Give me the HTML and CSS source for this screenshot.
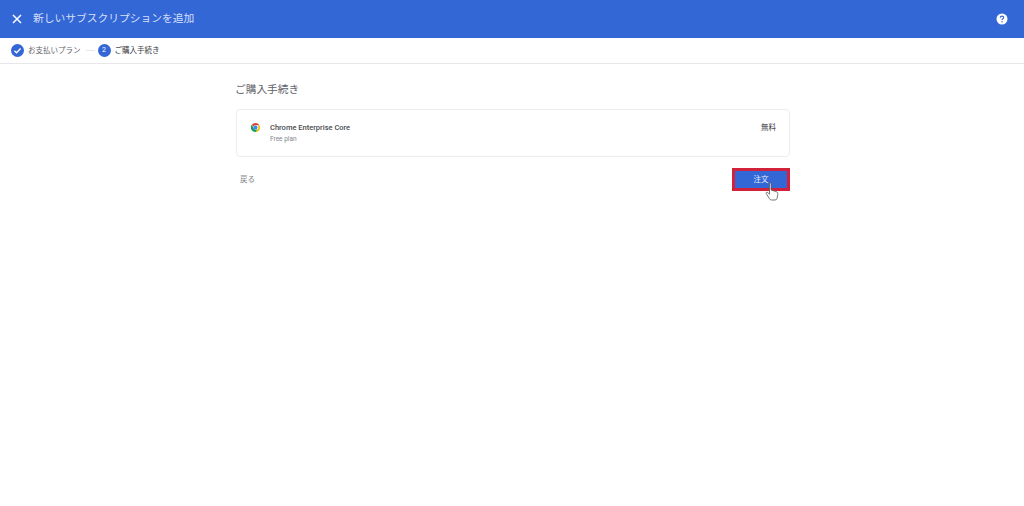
FILE: index.html
```html
<!DOCTYPE html>
<html lang="ja">
<head>
<meta charset="utf-8">
<title>新しいサブスクリプションを追加</title>
<link rel="stylesheet" href="styles.css">
</head>
<body>
<header class="appbar">
  <svg class="close" viewBox="0 0 10 10" width="10" height="10"><path d="M1 1L9 9M9 1L1 9" stroke="#fff" stroke-width="1.5" fill="none"/></svg>
  <h1 class="appbar-title">新しいサブスクリプションを追加</h1>
  <svg class="help" viewBox="0 0 12 12" width="12" height="12"><circle cx="6" cy="6" r="5.5" fill="#fff"/><path d="M4.3 4.7C4.3 3.7 5 3.1 6 3.1S7.7 3.7 7.7 4.6C7.7 5.7 6 5.8 6 7.1" stroke="#3367d6" stroke-width="1.1" fill="none"/><circle cx="6" cy="8.8" r=".75" fill="#3367d6"/></svg>
</header>
<nav class="stepper">
  <span class="step-dot"><svg viewBox="0 0 13 13" width="13" height="13"><path d="M3.4 6.8L5.5 8.8L9.6 4.5" stroke="#fff" stroke-width="1.3" fill="none"/></svg></span>
  <span class="step-label">お支払いプラン</span>
  <span class="step-line"></span>
  <span class="step-dot">2</span>
  <span class="step-label step-current">ご購入手続き</span>
</nav>
<main class="content">
  <h2 class="heading">ご購入手続き</h2>
  <section class="card">
    <svg class="logo" viewBox="0 0 48 48" width="11" height="11">
      <path d="M24 4A20 20 0 0 1 41.3 14H24a10 10 0 0 0-9.3 6.4L7.9 12.1A20 20 0 0 1 24 4z" fill="#db4437"/>
      <path d="M41.3 14A20 20 0 0 1 25 44l8-14a10 10 0 0 0-1-16z" fill="#f4c20d"/>
      <path d="M25 44A20 20 0 0 1 7.900 12.100L16 27a10 10 0 0 0 17 3z" fill="#0f9d58"/>
      <circle cx="24" cy="24" r="8.500" fill="#4285f4"/>
    </svg>
    <div class="plan">
      <div class="plan-name">Chrome Enterprise Core</div>
      <div class="plan-sub">Free plan</div>
    </div>
    <div class="price">無料</div>
  </section>
  <div class="actions">
    <button class="back" type="button">戻る</button>
    <button class="order" type="button">注文</button>
    <svg class="cursor" viewBox="0 0 14 19" width="14" height="19"><path d="M4.500 1.500C4.500.700 6 .700 6 1.500V8L11 9.500C12.500 10 13 11 12.800 12.500L12 16.500C11.800 17.500 11 18 10 18H6.500C5.500 18 5 17.500 4.500 16.800L1.200 11.500C.700 10.500 2 9.700 2.800 10.500L4.500 12.300z" fill="#fff" stroke="#555" stroke-width=".8"/></svg>
  </div>
</main>
</body>
</html>
```
FILE: styles.css
```css
* { box-sizing: border-box; }
html, body { margin: 0; padding: 0; height: 100%; background: #fff; }
body { font-family: "Roboto", "Noto Sans CJK JP", sans-serif; color: #3c4043; overflow: hidden; }

.appbar { height: 38px; background: #3367d6; display: flex; align-items: center; padding: 0 16px 0 12px; }
.close { margin-right: 11px; flex: none; }
.appbar-title { margin: 0; flex: 1; font-size: 10.750px; font-weight: 400; color: #d5dff6; line-height: 16px; }
.help { flex: none; }

.stepper { height: 26px; display: flex; align-items: center; padding: 0 0 1px 11px; border-bottom: 1px solid #e6e7e9; }
.step-dot { width: 13px; height: 13px; border-radius: 50%; background: #3367d6; color: #fff; font-size: 7px; display: flex; align-items: center; justify-content: center; flex: none; }
.step-label { font-size: 7.500px; margin: 0 0 1px 4px; color: #5f6368; white-space: nowrap; }
.step-current { color: #3c4043; }
.step-line { width: 9px; height: 1px; background: #e8e8e8; margin: 0 3px 0 5px; flex: none; }

.content { width: 554px; margin-left: 236px; padding-top: 17px; position: relative; }
.heading { margin: 0 0 0 -1px; font-size: 10.700px; line-height: 17px; font-weight: 400; color: #5f6368; }
.card { margin-top: 11px; height: 48px; border: 1px solid #eceded; border-radius: 4px; display: flex; align-items: flex-start; padding: 12px 13px 0 13px; }
.logo { margin: 0 9px 0 0; flex: none; }
.plan { flex: 1; }
.plan-name { font-size: 7.500px; line-height: 11px; color: #4a4d50; font-weight: 500; }
.plan-sub { font-size: 6.500px; line-height: 9px; margin-top: 2px; color: #80868b; }
.price { font-size: 7.500px; line-height: 11px; color: #3c4043; }

.actions { margin-top: 11px; display: flex; justify-content: space-between; align-items: center; position: relative; }
.back { border: 0; background: none; padding: 0 0 0 4px; font: inherit; font-size: 7.500px; line-height: 10px; color: #80868b; }
.order { width: 58px; height: 23px; background: #3367d6; border: 3px solid #d2213a; color: #e8eefb; font: inherit; font-size: 7.500px; line-height: 10px; padding: 0; }
.cursor { position: absolute; right: 11px; top: 14px; }
```
